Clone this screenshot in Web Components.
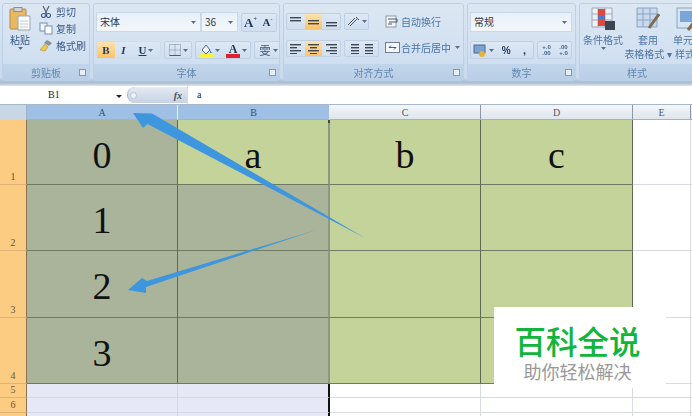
<!DOCTYPE html>
<html>
<head>
<meta charset="utf-8">
<style>
html, body { margin: 0; padding: 0; background: #fff; }
body { width: 692px; height: 416px; overflow: hidden; position: relative; font-family: "Noto Sans CJK SC", sans-serif; }
</style>
</head>
<body>
<xl-ribbon>
  <xl-group label="剪贴板" style="width:88px">
    <xl-clipboard></xl-clipboard>
  </xl-group>
  <xl-group label="字体" style="width:187px">
    <xl-font-tools></xl-font-tools>
  </xl-group>
  <xl-group label="对齐方式" style="width:181px">
    <xl-align-tools></xl-align-tools>
  </xl-group>
  <xl-group label="数字" style="width:109px">
    <xl-number-tools></xl-number-tools>
  </xl-group>
  <xl-group label="样式" style="width:116px">
    <xl-style-tools></xl-style-tools>
  </xl-group>
</xl-ribbon>
<xl-formula-bar name="B1" value="a"></xl-formula-bar>
<xl-sheet></xl-sheet>
<xl-arrows></xl-arrows>
<xl-watermark></xl-watermark>

<script>
const caret = `<svg width="5" height="3" viewBox="0 0 5 3"><path d="M0 0h5L2.5 3z" fill="#5a6f8c"/></svg>`;

class XlRibbon extends HTMLElement {
    constructor() {
        super();
        this.attachShadow({ mode: "open" }).innerHTML = `
<style>
:host {
    display: flex;
    gap: 3px;
    height: 86px;
    box-sizing: border-box;
    padding: 3px 0 0 2px;
    overflow: hidden;
    background: linear-gradient(#dbe6f3, #c9daee 78px, #a9bdd2 82px, #b8c9da 84px, #e4ecf3);
}
</style>
<slot></slot>`;
    }
}

class XlGroup extends HTMLElement {
    constructor() {
        super();
        this.attachShadow({ mode: "open" }).innerHTML = `
<style>
:host {
    display: flex;
    flex: none;
    flex-direction: column;
    height: 78px;
    box-sizing: border-box;
    border: 1px solid #bcd0e6;
    border-radius: 3px;
    background: linear-gradient(#dce7f3, #d3e1f1 45px, #cbdcf0);
    overflow: hidden;
}
.body { flex: 1; min-height: 0; }
.label {
    position: relative;
    height: 16px;
    text-align: center;
    font: 10px/17px "Noto Sans CJK SC", sans-serif;
    color: #6286b0;
    background: linear-gradient(#c2d5ea, #b9cee7);
}
.label span { filter: blur(.3px); }
.launch {
    position: absolute;
    right: 3px;
    top: 5px;
    width: 5px;
    height: 5px;
    border: 1px solid #7f98b6;
    background: #e6eef7;
}
</style>
<div class="body"><slot></slot></div>
<div class="label"><span id="t"></span><i class="launch" id="l"></i></div>`;
    }

    connectedCallback() {
        this.shadowRoot.getElementById("t").textContent = this.getAttribute("label");
        if (this.getAttribute("label") === "样式") this.shadowRoot.getElementById("l").remove();
    }
}

class XlClipboard extends HTMLElement {
    constructor() {
        super();
        this.attachShadow({ mode: "open" }).innerHTML = `
<style>
:host { display: flex; gap: 8px; padding: 3px 0 0 6px; font: 10px/17px "Noto Sans CJK SC", sans-serif; color: #3a5a88; filter: blur(.4px); }
.paste { display: flex; flex-direction: column; align-items: center; width: 22px; }
.paste span { margin-top: 2px; line-height: 14px; }
.small { display: flex; flex-direction: column; margin-top: -4px; }
.small div { display: flex; align-items: center; gap: 3px; height: 17px; }
.small svg { flex: none; }
</style>
<div class="paste">
  <svg width="22" height="24" viewBox="0 0 22 24">
    <rect x="1" y="2" width="16" height="20" rx="1" fill="#e8b862" stroke="#b58a45"/>
    <rect x="5" y="0.5" width="8" height="4" fill="#cfd3da" stroke="#8a8f99"/>
    <path d="M9 9h12v14H9z" fill="#fbfbfb" stroke="#9aa3ae"/>
    <path d="M11 14h8M11 17h8M11 20h8" stroke="#c5ccd6"/>
  </svg>
  <span>粘贴</span>
  ${caret}
</div>
<div class="small">
  <div><svg width="14" height="13" viewBox="0 0 14 13"><path d="M4 1l4 8M10 1L6 9" stroke="#59606c" fill="none" stroke-width="1.2"/><circle cx="4.5" cy="10.5" r="2" fill="none" stroke="#3d5f96" stroke-width="1.2"/><circle cx="9.5" cy="10.5" r="2" fill="none" stroke="#3d5f96" stroke-width="1.2"/></svg><span>剪切</span></div>
  <div><svg width="14" height="13" viewBox="0 0 14 13"><rect x="1" y="1" width="7" height="8" fill="#f2f6fb" stroke="#6f8fb5"/><rect x="6" y="4" width="7" height="8" fill="#fff" stroke="#6f8fb5"/></svg><span>复制</span></div>
  <div><svg width="14" height="13" viewBox="0 0 14 13"><path d="M8 1l5 3-3 3-5-3z" fill="#8c8f96"/><path d="M6 5l3 3-3 4-5-1z" fill="#f0c74c" stroke="#b2902f" stroke-width=".6"/></svg><span>格式刷</span></div>
</div>`;
    }
}

class XlCombo extends HTMLElement {
    constructor() {
        super();
        this.attachShadow({ mode: "open" }).innerHTML = `
<style>
:host {
    display: flex;
    flex: none;
    align-items: center;
    justify-content: space-between;
    box-sizing: border-box;
    height: 20px;
    padding: 0 4px 0 3px;
    background: linear-gradient(#e8f0f8, #f3f7fb);
    border: 1px solid #c9d8ea;
    font: 10px/18px "Noto Sans CJK SC", sans-serif;
    color: #2b3a50;
}
</style>
<slot></slot>${caret}`;
    }
}

// one run of small ribbon buttons sharing a border
class XlBtns extends HTMLElement {
    constructor() {
        super();
        this.attachShadow({ mode: "open" }).innerHTML = `
<style>
:host {
    display: flex;
    flex: none;
    align-items: center;
    box-sizing: border-box;
    height: 17px;
    border: 1px solid #bfd0e4;
    border-radius: 2px;
    background: linear-gradient(#dde8f4, #cfdef0);
}
</style>
<slot></slot>`;
    }
}

class XlBtn extends HTMLElement {
    constructor() {
        super();
        this.attachShadow({ mode: "open" }).innerHTML = `
<style>
:host {
    display: flex;
    align-items: center;
    justify-content: center;
    gap: 2px;
    height: 100%;
    min-width: 17px;
    box-sizing: border-box;
    font: 700 10px/15px "Liberation Serif", serif;
    color: #223a5c;
}
:host([on]) { background: linear-gradient(#fde3ae, #fbc267); border-radius: 1px; }
</style>
<slot></slot>`;
    }
}

class XlFontTools extends HTMLElement {
    constructor() {
        super();
        this.attachShadow({ mode: "open" }).innerHTML = `
<style>
:host { display: flex; flex-direction: column; gap: 9px; padding: 8px 0 0 2px; filter: blur(.4px); }
.row { display: flex; gap: 2px; align-items: center; }
.abc { font: 700 12px/15px "Liberation Serif", serif; }
</style>
<div class="row">
  <xl-combo style="width:105px">宋体</xl-combo>
  <xl-combo style="width:37px;margin-left:-2px">36</xl-combo>
  <xl-btns style="height:19px;margin-left:1px"><xl-btn style="min-width:17px" class="abc"><span style="font-size:13px">A</span><sup style="font-size:6px;margin:-6px 0 0 -2px">+</sup></xl-btn><xl-btn><span style="font-size:11px">A</span><sup style="font-size:6px;margin:-6px 0 0 -2px">-</sup></xl-btn></xl-btns>
</div>
<div class="row" style="gap:3px">
  <xl-btns style="height:18px;margin-left:0;border-color:#cfdcec">
    <xl-btn on style="width:18px;font-size:11px">B</xl-btn>
    <xl-btn style="width:17px;font-style:italic;font-size:11px">I</xl-btn>
    <xl-btn style="width:28px;text-decoration:underline;font-size:11px">U ${caret}</xl-btn>
  </xl-btns>
  <xl-btns style="height:18px">
    <xl-btn style="width:26px"><svg width="12" height="12" viewBox="0 0 12 12"><path d="M.5.5h11v11H.5zM6 .5v11M.5 6h11" fill="none" stroke="#7d8a9c" stroke-dasharray="1 1"/><path d="M.5 11.5h11" stroke="#4c5a6e"/></svg>${caret}</xl-btn>
  </xl-btns>
  <xl-btns style="height:18px">
    <xl-btn style="width:27px"><svg width="14" height="15" viewBox="0 0 14 15"><path d="M3 7l4-5 4 5-4 4z" fill="#f1f4f8" stroke="#5b6777"/><path d="M11 7l2 3h-2z" fill="#4a82c0"/><rect y="11" width="14" height="4" fill="#f6f13c"/></svg>${caret}</xl-btn>
    <xl-btn style="width:27px"><svg width="14" height="15" viewBox="0 0 14 15"><text x="7" y="10" text-anchor="middle" font-family="Liberation Serif" font-weight="700" font-size="12" fill="#1f3350">A</text><rect y="11" width="14" height="4" fill="#e0212a"/></svg>${caret}</xl-btn>
  </xl-btns>
  <xl-btns style="height:18px">
    <xl-btn style="width:27px;font:11px 'Noto Sans CJK SC',sans-serif;color:#3b5478">雯${caret}</xl-btn>
  </xl-btns>
</div>`;
    }
}

function lines(widths) {
    // small bars of text-alignment icons
    return `<svg width="13" height="11" viewBox="0 0 13 11">${widths.map(w =>
        `<rect x="${w[0]}" y="${w[2]}" width="${w[1]}" height="1.4" fill="#3d4651"/>`).join("")}</svg>`;
}

class XlAlignTools extends HTMLElement {
    constructor() {
        super();
        this.attachShadow({ mode: "open" }).innerHTML = `
<style>
:host { display: flex; gap: 5px; padding: 9px 0 0 2px; font: 10px/16px "Noto Sans CJK SC", sans-serif; color: #4a74a6; filter: blur(.4px); }
.col { display: flex; flex-direction: column; }
.row { display: flex; gap: 3px; }
.wrap { display: flex; align-items: center; gap: 1px; height: 17px; white-space: nowrap; }
.wrap svg:last-child { margin-left: 3px; }
</style>
<div class="col" style="gap:10px">
  <div class="row">
    <xl-btns style="width:55px"><xl-btn style="width:18px">${lines([[1,11,1],[1,11,4]])}</xl-btn><xl-btn on style="width:18px">${lines([[1,11,4],[1,11,7]])}</xl-btn><xl-btn style="width:18px">${lines([[1,11,6],[1,11,9]])}</xl-btn></xl-btns>
    <xl-btns style="width:25px"><xl-btn style="width:25px"><svg width="13" height="11" viewBox="0 0 13 11"><path d="M1 9l7-7M3 10l7-7M9 1l3 3" stroke="#4a5564" fill="none"/></svg>${caret}</xl-btn></xl-btns>
  </div>
  <div class="row">
    <xl-btns style="width:55px"><xl-btn style="width:18px">${lines([[1,11,1],[1,7,4],[1,11,7],[1,7,10]])}</xl-btn><xl-btn on style="width:18px">${lines([[1,11,1],[3,7,4],[1,11,7],[3,7,10]])}</xl-btn><xl-btn style="width:18px">${lines([[1,11,1],[5,7,4],[1,11,7],[5,7,10]])}</xl-btn></xl-btns>
    <xl-btns style="width:35px"><xl-btn style="width:17px">${lines([[4,8,1],[4,8,4],[4,8,7],[4,8,10]])}</xl-btn><xl-btn style="width:17px">${lines([[1,8,1],[1,8,4],[1,8,7],[1,8,10]])}</xl-btn></xl-btns>
  </div>
</div>
<div class="col" style="gap:9px;margin-left:1px">
  <div class="wrap"><svg width="15" height="13" viewBox="0 0 15 13"><rect x="1" y="1" width="10" height="11" fill="#f5f7fa" stroke="#8b97a7"/><path d="M3 4h9v3H4M3 9h4" stroke="#46566a" fill="none"/></svg><span>自动换行</span></div>
  <div class="wrap"><svg width="15" height="13" viewBox="0 0 15 13"><rect x=".5" y="1.5" width="14" height="10" fill="#f5f7fa" stroke="#6f7d90"/><path d="M4 6.5h7M4 6.5l2-2M11 6.5l-2 2" stroke="#38628f" fill="none"/></svg><span>合并后居中</span>${caret}</div>
</div>`;
    }
}

class XlNumberTools extends HTMLElement {
    constructor() {
        super();
        this.attachShadow({ mode: "open" }).innerHTML = `
<style>
:host { display: flex; flex-direction: column; gap: 9px; padding: 8px 0 0 2px; filter: blur(.4px); }
.row { display: flex; gap: 3px; }
</style>
<xl-combo style="width:102px">常规</xl-combo>
<div class="row">
  <xl-btns style="width:64px;height:18px">
    <xl-btn style="width:26px"><svg width="14" height="13" viewBox="0 0 14 13"><rect x="1" y="1" width="11" height="8" fill="#7ba3d2" stroke="#4b6a92"/><circle cx="9" cy="10" r="3" fill="#e6b23a"/></svg>${caret}</xl-btn>
    <xl-btn style="width:20px;font:700 10px 'Liberation Sans',sans-serif">%</xl-btn>
    <xl-btn style="width:16px;font:700 11px 'Liberation Sans',sans-serif">,</xl-btn>
  </xl-btns>
  <xl-btns style="width:35px;height:18px">
    <xl-btn style="width:17px;font:700 6px/6px 'Liberation Sans',sans-serif;color:#3c5f8a">+.0<br>.00</xl-btn>
    <xl-btn style="width:17px;font:700 6px/6px 'Liberation Sans',sans-serif;color:#3c5f8a">.00<br>+.0</xl-btn>
  </xl-btns>
</div>`;
    }
}

class XlStyleTools extends HTMLElement {
    constructor() {
        super();
        this.attachShadow({ mode: "open" }).innerHTML = `
<style>
:host { display: flex; gap: 7px; padding: 3px 0 0 4px; font: 10px/14px "Noto Sans CJK SC", sans-serif; color: #4f76a5; text-align: center; white-space: nowrap; filter: blur(.4px); }
.big { display: flex; flex-direction: column; align-items: center; width: 38px; flex: none; }
.big svg { margin-bottom: 2px; flex: none; }
</style>
<div class="big">
  <svg width="24" height="24" viewBox="0 0 24 24"><path d="M1 1h20v19H1z" fill="#eef2f6" stroke="#98a8ba"/><path d="M1 7h20M1 13h20M7 1v19M14 1v19" stroke="#98a8ba"/><path d="M7 2h7v6H7z" fill="#d94b40"/><path d="M7 8h7v5H7z" fill="#5578c4"/><path d="M7 13h7v6H7z" fill="#d94b40"/><rect x="14" y="14" width="10" height="9" fill="#3c4551"/></svg>
  <span>条件格式</span>${caret}
</div>
<div class="big">
  <svg width="24" height="24" viewBox="0 0 24 24"><path d="M1 1h20v19H1z" fill="#c8d9ee" stroke="#8ca4c0"/><path d="M1 7h20M1 13h20M7 1v19M14 1v19" stroke="#8ca4c0"/><path d="M23 7L13 21" stroke="#7f6b4f" stroke-width="3"/></svg>
  <span>套用</span>
  <span>表格格式 ▾</span>
</div>
<div class="big" style="align-items:flex-start;margin-left:-1px">
  <svg width="24" height="24" viewBox="0 0 24 24" style="margin-left:3px"><rect x="1" y="1" width="22" height="20" fill="#d6e4f4" stroke="#8ca4c0"/><rect x="4" y="4" width="16" height="11" fill="#7da6d8"/><path d="M22 10L12 23" stroke="#7f6b4f" stroke-width="3"/></svg>
  <span>单元格</span>
  <span style="margin-left:2px">样式</span>
</div>`;
    }
}

class XlFormulaBar extends HTMLElement {
    constructor() {
        super();
        this.attachShadow({ mode: "open" }).innerHTML = `
<style>
:host {
    display: flex;
    align-items: center;
    box-sizing: border-box;
    height: 19px;
    border-bottom: 1px solid #a8b8c8;
    background: #fff;
    font: 10px/18px "Liberation Serif", serif;
    color: #222;
}
.name { width: 116px; box-sizing: border-box; padding-left: 48px; }
.drop { width: 11px; }
.oval {
    display: flex;
    align-items: center;
    justify-content: space-between;
    box-sizing: border-box;
    width: 60px;
    height: 16px;
    padding: 0 5px 0 2px;
    border-radius: 8px 0 0 8px;
    background: linear-gradient(#e4ebf3, #c5d3e2);
    border-left: 1px solid #aab8c8;
    font: italic 700 10px "Liberation Serif", serif;
    color: #45536a;
}
.oval i { width: 7px; height: 7px; border-radius: 50%; background: #eef3f8; border: 1px solid #b6c4d3; box-sizing: border-box; }
.value { padding-left: 9px; border-left: 1px solid #d6dde5; height: 100%; }
</style>
<div class="name" id="name"></div>
<div class="drop"><svg width="6" height="3" viewBox="0 0 6 3"><path d="M0 0h6L3 3z" fill="#222"/></svg></div>
<div class="oval"><i></i><span>fx</span></div>
<div class="value" id="value"></div>`;
    }

    connectedCallback() {
        this.shadowRoot.getElementById("name").textContent = this.getAttribute("name");
        this.shadowRoot.getElementById("value").textContent = this.getAttribute("value");
    }
}

const COLS = [
    { name: "A", w: 151, on: true },
    { name: "B", w: 152, on: true },
    { name: "C", w: 151 },
    { name: "D", w: 152 },
    { name: "E", w: 58 },
    { name: "", w: 2 }
];
const ROWS = [
    { h: 65, v: ["0", "a", "b", "c"] },
    { h: 66, v: ["1", "", "", ""] },
    { h: 67, v: ["2", "", "", ""] },
    { h: 66, v: ["3", "", "", ""] },
    { h: 14, v: [] },
    { h: 15, v: [] },
    { h: 15, v: [] }
];

class XlSheet extends HTMLElement {
    constructor() {
        super();
        this.attachShadow({ mode: "open" }).innerHTML = `
<style>
:host {
    display: grid;
    grid-template-columns: 27px ${COLS.map(c => c.w + "px").join(" ")};
    grid-template-rows: 15px ${ROWS.map(r => r.h + "px").join(" ")};
    background: #fff;
    overflow: hidden;
    font: 10px/16px "Liberation Serif", serif;
}
div { box-sizing: border-box; }
.corner { background: #c8d6e6; border-right: 1px solid #9fb3c8; }
.ch {
    text-align: center;
    color: #4a5a70;
    background: linear-gradient(#f4f6f9, #dfe5ec);
    border-right: 1px solid #8d99a6;
    border-bottom: 1px solid #a5b2bf;
}
.ch.on { background: #9fc0e4; border-right-color: #e8f0f8; color: #38506e; }
.rh {
    display: flex;
    align-items: flex-end;
    justify-content: center;
    line-height: 14px;
    background: #fdcc83;
    border-right: 1px solid #8a7350;
    border-bottom: 1px solid #e0b277;
    color: #6b5230;
}
.cell {
    position: relative;
    text-align: center;
    font: 38px/71px "Liberation Serif", serif;
    color: #111;
    border-right: 1px solid #5e6a55;
    border-bottom: 1px solid #6f7a62;
}
.green { background: #c4d39a; }
.grey { background: #a9b49a; }
.sel { background: #e6e9f5; border-right: 1px solid #d3d8e8; border-bottom: 1px solid #d3d8e8; }
.plain { border-right: 1px solid #d8dce0; border-bottom: 1px solid #d8dce0; }
.b-edge { border-right: 2px solid #8d9688; }
.thick { border-right: 2px solid #111; }
.handle { position: absolute; right: -2px; top: 0; width: 2px; height: 3px; background: #444; }
</style>`;
        const root = this.shadowRoot;
        const add = (cls, text) => {
            const d = document.createElement("div");
            d.className = cls;
            d.textContent = text || "";
            root.appendChild(d);
            return d;
        };

        add("corner");
        COLS.forEach(c => add("ch" + (c.on ? " on" : ""), c.name));

        ROWS.forEach((row, r) => {
            // row 7 only shows its top edge, its number is below the fold
            add("rh", r < 6 ? String(r + 1) : "");
            COLS.forEach((col, c) => {
                let cls;
                if (r < 4 && c < 4) {
                    // A1:A4 and B2:B4 are selected, B1 is the active cell
                    const grey = c < 2 && !(r === 0 && c === 1);
                    cls = "cell " + (grey ? "grey" : "green");
                    if (c === 1) cls += " b-edge";
                } else if (c < 2 && r >= 4) {
                    cls = "sel" + (c === 1 ? " thick" : "");
                } else {
                    cls = "plain";
                }
                const cell = add(cls, row.v[c]);
                if (r === 0 && c === 1) {
                    const h = document.createElement("i");
                    h.className = "handle";
                    cell.appendChild(h);
                }
            });
        });
    }
}

class XlArrows extends HTMLElement {
    constructor() {
        super();
        this.attachShadow({ mode: "open" }).innerHTML = `
<style>
:host { position: absolute; left: 0; top: 0; width: 692px; height: 416px; pointer-events: none; }
svg { display: block; }
</style>
<svg width="692" height="416" viewBox="0 0 692 416">
  <path d="M365 238L152 113.5L133 113L143 128L147.5 124Z" fill="#3d96de"/>
  <path d="M316 230L147 281L142 278L128 290L146 293L146 287Z" fill="#3d96de"/>
</svg>`;
    }
}

class XlWatermark extends HTMLElement {
    constructor() {
        super();
        this.attachShadow({ mode: "open" }).innerHTML = `
<style>
:host {
    position: absolute;
    left: 494px;
    top: 307px;
    width: 172px;
    height: 81px;
    display: flex;
    flex-direction: column;
    align-items: center;
    background: #fff;
    font-family: "Noto Sans CJK SC", sans-serif;
}
.big { margin-top: 15px; margin-left: -5px; font-size: 31.5px; line-height: 36px; font-weight: 500; color: #12b53c; white-space: nowrap; }
.sub { margin-top: 2px; margin-left: -5px; font-size: 18px; line-height: 22px; color: #999; white-space: nowrap; }
</style>
<div class="big">百科全说</div>
<div class="sub">助你轻松解决</div>`;
    }
}

customElements.define("xl-ribbon", XlRibbon);
customElements.define("xl-group", XlGroup);
customElements.define("xl-clipboard", XlClipboard);
customElements.define("xl-combo", XlCombo);
customElements.define("xl-btns", XlBtns);
customElements.define("xl-btn", XlBtn);
customElements.define("xl-font-tools", XlFontTools);
customElements.define("xl-align-tools", XlAlignTools);
customElements.define("xl-number-tools", XlNumberTools);
customElements.define("xl-style-tools", XlStyleTools);
customElements.define("xl-formula-bar", XlFormulaBar);
customElements.define("xl-sheet", XlSheet);
customElements.define("xl-arrows", XlArrows);
customElements.define("xl-watermark", XlWatermark);
</script>
</body>
</html>
